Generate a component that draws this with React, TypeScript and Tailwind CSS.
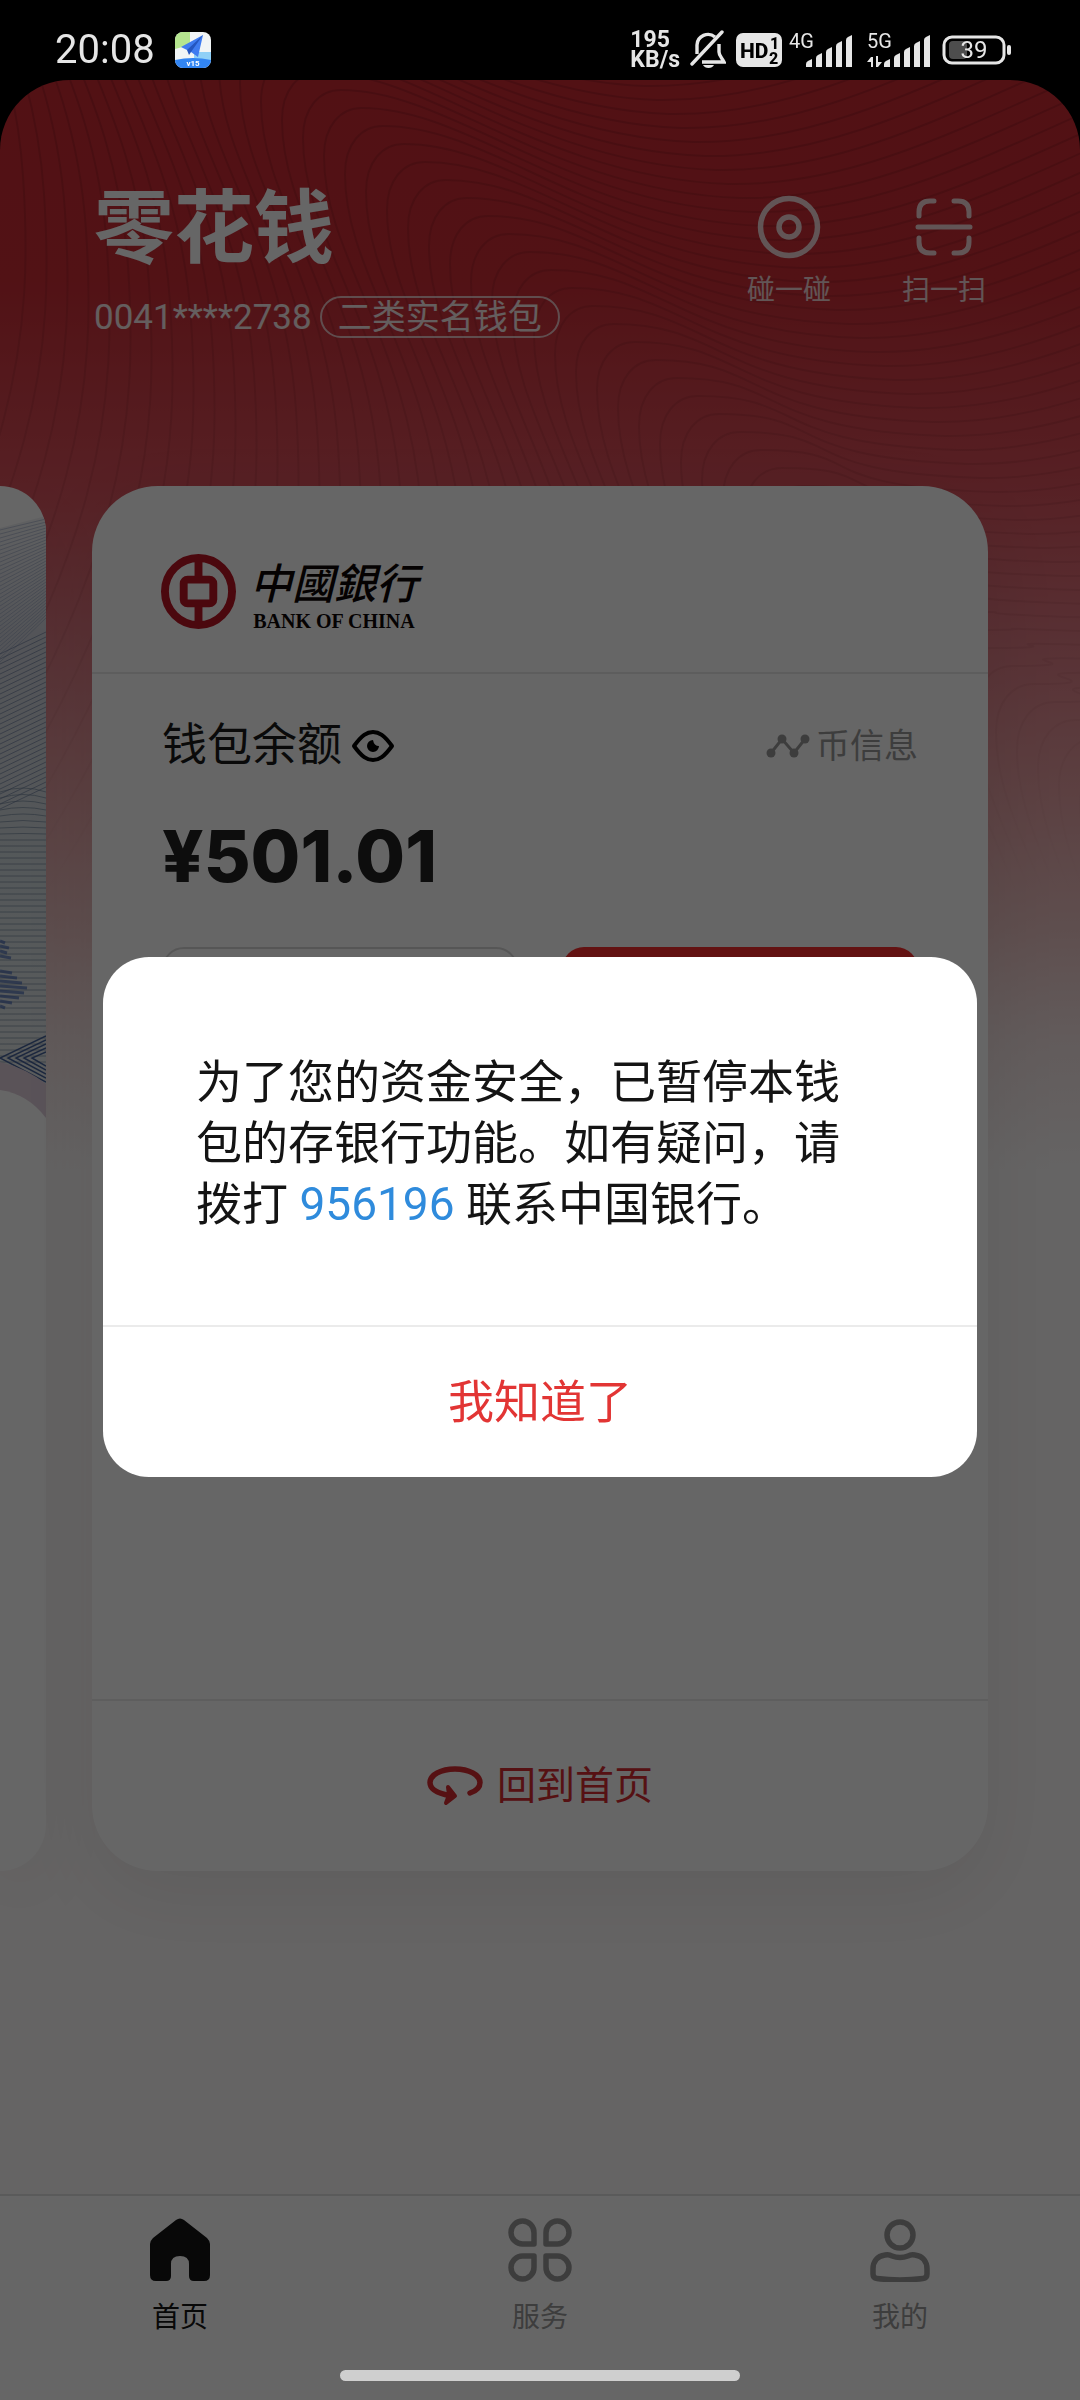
import { useState } from "react"

const waves = Array.from({ length: 62 }, (_, index) => index - 18)

const tabs = [
  { label: "首页", icon: <HomeIcon />, active: true },
  { label: "服务", icon: <ServiceIcon />, active: false },
  { label: "我的", icon: <ProfileIcon />, active: false },
]

function wavePath(i: number) {
  const x = 341 + 21 * i
  const y = 90 + 18 * i
  const vx = 753 + 12 * i
  const vy = 212 + 14 * i
  return [
    `M${x - 130} ${y + 1000}`,
    `C${x + 60} ${y + 720} ${x + 70} ${y + 560} ${x + 60} ${y + 410}`,
    `C${x + 48} ${y + 230} ${x - 38} ${y + 150} ${x - 38} ${y + 48}`,
    `C${x - 38} ${y + 18} ${x - 22} ${y} ${x} ${y}`,
    `C${x + 110} ${y} ${vx - 190} ${vy - 6} ${vx} ${vy}`,
    `C${vx + 130} ${vy + 2} ${vx + 240} ${vy - 60} ${vx + 400} ${vy - 130}`,
  ].join(" ")
}

function Waves() {
  return (
    <svg className="absolute inset-x-0 top-0 h-[1080px] w-full" viewBox="0 80 1080 1080" preserveAspectRatio="xMidYMin slice" fill="none" aria-hidden="true">
      <defs>
        <linearGradient id="wave" gradientUnits="userSpaceOnUse" x1="0" y1="80" x2="0" y2="900">
          <stop offset="0" stopColor="#3d0008" stopOpacity="0.17" />
          <stop offset="0.5" stopColor="#5d1018" stopOpacity="0.12" />
          <stop offset="0.75" stopColor="#5d1018" stopOpacity="0.06" />
          <stop offset="1" stopColor="#5d1018" stopOpacity="0" />
        </linearGradient>
      </defs>
      {waves.map((i) => (
        <path key={i} d={wavePath(i)} stroke="url(#wave)" strokeWidth="2" />
      ))}
    </svg>
  )
}

function NavigationAppIcon() {
  return (
    <svg className="size-9" viewBox="0 0 36 36" aria-hidden="true">
      <defs>
        <clipPath id="app">
          <rect width="36" height="36" rx="8" />
        </clipPath>
      </defs>
      <g clipPath="url(#app)">
        <rect width="36" height="36" fill="#f1f5f6" />
        <path d="M0 0h15v13L0 17z" fill="#b5e58f" />
        <path d="M19 20h17v10H19z" fill="#8fd0f7" />
        <path d="M6 15 28 3l-5 22-7-5z" fill="#3f7cf0" />
        <path d="M28 3 16 20l-2 3-2-5z" fill="#2456c0" />
        <path d="M0 28q18-4 36 0v8H0z" fill="#3285f2" />
      </g>
      <text x="18" y="34" textAnchor="middle" fontSize="8" fontWeight="700" fill="#fff">v15</text>
    </svg>
  )
}

function BellOffIcon() {
  return (
    <svg className="h-10 w-9" viewBox="0 0 36 40" fill="none" stroke="#e6e6e6" strokeWidth="3.4" aria-hidden="true">
      <path d="M7 24V15a11 11 0 0 1 18-8M29 14v8c0 4 3 6 5 10H12" />
      <path d="M2 34 32 2" strokeLinecap="round" />
      <path d="M13 35h11a6 5 0 0 1-11 0z" fill="#e6e6e6" stroke="none" />
    </svg>
  )
}

function HdBadge() {
  return (
    <svg className="h-[34px] w-[46px]" viewBox="0 0 46 34" aria-hidden="true">
      <rect width="46" height="34" rx="7" fill="#e6e6e6" />
      <text x="4" y="25" fontSize="21" fontWeight="800">HD</text>
      <text x="34" y="16" fontSize="16" fontWeight="800">1</text>
      <text x="33" y="31" fontSize="16" fontWeight="800">2</text>
    </svg>
  )
}

function Signal({ label, transfer }: { label: string; transfer?: boolean }) {
  return (
    <svg className="h-11 w-[66px]" viewBox="0 -4 66 44" fill="#e6e6e6" role="img" aria-label={label}>
      <text x="1" y="16" fontSize="20">{label}</text>
      {transfer && (
        <path d="M1 30 5 25H7v10H5v-5zM10 24h2v6h4l-4 5h-2z" />
      )}
      {[0, 1, 2, 3, 4].map((i) => (
        <path key={i} d={`M${18 + i * 10} ${35}v${-3 - i * 6}q0-2 2-3l4-2v${8 + i * 6}z`} />
      ))}
    </svg>
  )
}

function Battery() {
  return (
    <svg className="h-[30px] w-[70px]" viewBox="0 0 70 30" role="img" aria-label="39%">
      <rect x="2" y="2" width="60" height="26" rx="8" fill="none" stroke="#e6e6e6" strokeWidth="3" />
      <rect x="7" y="6" width="18" height="18" rx="4" fill="#4d4d4d" />
      <rect x="65" y="10" width="4" height="10" rx="2" fill="#e6e6e6" />
      <text x="32" y="23" textAnchor="middle" fontSize="24" fill="#e6e6e6">39</text>
    </svg>
  )
}

function StatusBar() {
  return (
    <div className="relative z-30 flex h-20 shrink-0 items-center pr-[68px] pl-[55px] pt-[19px] text-[#e6e6e6]">
      <span className="text-[40px] leading-none">20:08</span>
      <div className="ml-5">
        <NavigationAppIcon />
      </div>
      <div className="ml-auto flex items-center gap-[10px]">
        <div className="text-[23px] leading-[20px] font-bold">
          <div>195</div>
          <div>KB/s</div>
        </div>
        <BellOffIcon />
        <HdBadge />
        <div className="-ml-1 flex gap-3">
          <Signal label="4G" />
          <Signal label="5G" transfer />
        </div>
        <Battery />
      </div>
    </div>
  )
}

function TapIcon() {
  return (
    <svg className="size-16" viewBox="0 0 64 64" fill="none" stroke="currentColor" strokeWidth="5.500" aria-hidden="true">
      <circle cx="32" cy="32" r="28.500" />
      <circle cx="32" cy="32" r="10" />
    </svg>
  )
}

function ScanIcon() {
  return (
    <svg className="size-16" viewBox="0 0 64 64" fill="none" stroke="currentColor" strokeWidth="5" strokeLinecap="round" aria-hidden="true">
      <path d="M7 21v-4Q7 6 18 6h4M42 6h4q11 0 11 11v4M7 43v4q0 11 11 11h4M42 58h4q11 0 11-11v-4M6 32h52" />
    </svg>
  )
}

function EyeIcon() {
  return (
    <svg className="h-[34px] w-11" viewBox="0 0 44 34" fill="none" stroke="#000" strokeWidth="4" strokeLinejoin="round" aria-hidden="true">
      <path d="M3 17C11 6 16 3 22 3s11 3 19 14C33 28 28 31 22 31S11 28 3 17z" />
      <path d="M22 11a6 6 0 1 0 6 6q-5 0-6-6z" fill="#000" stroke="none" />
    </svg>
  )
}

function TrendIcon() {
  return (
    <svg className="h-6 w-11" viewBox="0 0 44 24" fill="currentColor" stroke="currentColor" aria-hidden="true">
      <path d="M5 19 16 5l12 14L39 5" fill="none" strokeWidth="3" />
      <g stroke="none">
        <circle cx="5" cy="19" r="4.500" />
        <circle cx="16" cy="5" r="4.500" />
        <circle cx="28" cy="19" r="4.500" />
        <circle cx="39" cy="5" r="4.500" />
      </g>
    </svg>
  )
}

function FlipIcon() {
  return (
    <svg className="h-10 w-14" viewBox="0 0 56 40" fill="none" stroke="currentColor" strokeWidth="5.500" strokeLinecap="round" strokeLinejoin="round" aria-hidden="true">
      <path d="M43 27C49 25 53 21 53 16.500 53 9 42 3 28 3S3 9 3 16.500c0 7 8 11 20 13" />
      <path d="m21 21 7 9-9 7 3-8z" fill="currentColor" strokeWidth="4" />
    </svg>
  )
}

function HomeIcon() {
  return (
    <svg className="size-16" viewBox="0 0 64 64" fill="currentColor" aria-hidden="true">
      <path d="M28 2q4-3 8 0l23 18q3 3 3 6v31q0 6-6 6H46q-5 0-5-5V46q0-8-9-8t-9 8v12q0 5-5 5H8q-6 0-6-6V26q0-3 3-6z" />
    </svg>
  )
}

function ServiceIcon() {
  return (
    <svg className="size-16" viewBox="0 0 64 64" fill="none" stroke="currentColor" strokeWidth="5.500" strokeLinejoin="round" aria-hidden="true">
      <path d="M26 26H15A11.500 11.500 0 1 1 26 15z" />
      <path d="M38 26h11a11.500 11.500 0 1 0-11-11z" />
      <path d="M26 38H15a11.500 11.500 0 1 0 11 11z" />
      <path d="M38 38h11a11.500 11.500 0 1 1-11 11z" />
    </svg>
  )
}

function ProfileIcon() {
  return (
    <svg className="size-16" viewBox="0 0 64 64" fill="none" stroke="currentColor" strokeWidth="5.500" strokeLinejoin="round" aria-hidden="true">
      <circle cx="32" cy="17" r="13" />
      <path d="M17 37q4-1 7 1 8 3 16 0 3-2 7-1c8 1 12 7 12 14v5q0 4-4 4.500-23 3-46 0-4-.5-4-4.500v-5c0-7 4-13 12-14z" />
    </svg>
  )
}

function BankLogo() {
  return (
    <div className="flex items-center gap-[14px]">
      <svg className="size-[75px]" viewBox="0 0 76 76" fill="none" stroke="#bb1424" aria-hidden="true">
        <circle cx="38" cy="38" r="34" strokeWidth="8" />
        <rect x="23" y="26" width="30" height="24" rx="4" strokeWidth="8" />
        <path d="M38 4v20M38 52v20" strokeWidth="8" />
      </svg>
      <div className="flex flex-col items-center text-[#0d0606]">
        <span className="font-['Noto_Sans_CJK_TC',sans-serif] text-[42px] leading-[60px] font-medium italic">中國銀行</span>
        <span className="font-['Liberation_Serif',serif] text-[20px] leading-[20px] font-bold">BANK OF CHINA</span>
      </div>
    </div>
  )
}

function PreviousCard() {
  return (
    <div className="w-[46px] shrink-0 overflow-hidden rounded-tr-[66px] rounded-br-[66px] bg-white shadow-[0_24px_70px_rgba(0,0,0,0.06)]">
      <svg className="h-[640px] w-[46px]" viewBox="0 0 46 640" fill="none" aria-hidden="true">
        <defs>
          <linearGradient id="note" x1="0" y1="0" x2="0" y2="1">
            <stop offset="0" stopColor="#f0f1f4" />
            <stop offset="0.2" stopColor="#cfd2db" />
            <stop offset="0.6" stopColor="#d3dce0" />
            <stop offset="1" stopColor="#e6e9ea" />
          </linearGradient>
        </defs>
        <path d="M0 42 46 30V640H0z" fill="url(#note)" />
        {Array.from({ length: 34 }, (_, i) => (
          <path key={i} d={`M0 ${44 + i * 4}L46 ${33 + i * 3}`} stroke="#8d9bbb" strokeOpacity="0.5" />
        ))}
        {Array.from({ length: 32 }, (_, i) => (
          <path key={i} d={`M0 ${168 + i * 5}L46 ${146 + i * 5}`} stroke="#5a6b92" strokeOpacity="0.55" />
        ))}
        {Array.from({ length: 46 }, (_, i) => (
          <path key={i} d={`M0 ${306 + i * 6}q23 -${Math.max(0, 8 - i)} 46 0`} stroke="#6b7f96" strokeOpacity="0.6" />
        ))}
        {[455, 460, 465, 470, 485, 490, 495, 500, 505, 510, 515, 520].map((y, i) => (
          <path key={y} d={`M0 ${y}l${[5, 9, 7, 11, 12, 17, 22, 27, 24, 19, 12, 5][i]} 2`} stroke="#4a6cb5" strokeWidth="3" strokeOpacity="0.7" />
        ))}
        {[0, 8, 16, 24, 32].map((i) => (
          <path key={i} d={`M46 ${550 + i / 2}L${i} 572L46 ${596 - i / 2}`} stroke="#46629b" strokeWidth="1.500" />
        ))}
        <path d="M0 576q26 6 46 22v42H0z" fill="#e0cfdc" />
        <path d="M0 604q28 4 46 28v8H0z" fill="#fff" />
      </svg>
    </div>
  )
}

function WalletCard() {
  return (
    <section className="mr-[92px] ml-[46px] flex min-w-0 flex-1 flex-col rounded-[66px] bg-white shadow-[0_24px_80px_rgba(0,0,0,0.07)]">
      <div className="flex h-[188px] items-center border-b-2 border-[#e8e8e8] px-[69px] pt-6">
        <BankLogo />
      </div>
      <div className="flex-1 px-[70px] pt-10">
        <div className="flex items-center justify-between">
          <div className="flex items-center gap-[9px]">
            <h2 className="text-[45px] leading-[64px] text-[#1a1a1a]">钱包余额</h2>
            <button aria-label="显示余额">
              <EyeIcon />
            </button>
          </div>
          <a href="#info" className="flex items-center gap-[6px] text-[34px] leading-[64px] text-[#9a9a9a]">
            <TrendIcon />
            币信息
          </a>
        </div>
        <div className="mt-9 font-[Inter,sans-serif] text-[72px] leading-[84px] font-extrabold text-[#222]">¥501.01</div>
        <div className="mt-[49px] grid grid-cols-2 gap-11">
          <div className="h-[100px] rounded-[22px] border-2 border-[#d8d8d8]" />
          <div className="h-[100px] rounded-[22px] bg-[#f72f2d]" />
        </div>
      </div>
      <a href="#home" className="flex h-[172px] items-center justify-center gap-[14px] border-t-2 border-[#ececec] text-[39px] text-[#d62b31]">
        <FlipIcon />
        回到首页
      </a>
    </section>
  )
}

function Header() {
  return (
    <header className="flex h-[406px] shrink-0 justify-between px-[94px] pt-[105px] text-white">
      <div>
        <h1 className="text-[80px] leading-[88px] font-bold">零花钱</h1>
        <div className="mt-[23px] flex items-center gap-2 text-white/90">
          <span className="text-[35px] leading-none">0041****2738</span>
          <span className="rounded-full border-2 border-white/70 px-4 text-[34px] leading-[38px]">二类实名钱包</span>
        </div>
      </div>
      <div className="flex items-start gap-[71px] pt-[10px] text-[28px] leading-[40px] text-white/80">
        <button className="flex flex-col items-center gap-3">
          <TapIcon />
          碰一碰
        </button>
        <button className="flex flex-col items-center gap-3">
          <ScanIcon />
          扫一扫
        </button>
      </div>
    </header>
  )
}

function TabBar() {
  return (
    <nav className="flex h-[206px] shrink-0 items-start justify-around border-t-2 border-[#e0e0e0] bg-white pt-[22px]">
      {tabs.map((tab) => (
        <a
          key={tab.label}
          href="#tab"
          className={`flex flex-1 flex-col items-center gap-4 text-[28px] leading-[40px] ${tab.active ? "text-[#141414]" : "text-[#999]"}`}
        >
          {tab.icon}
          {tab.label}
        </a>
      ))}
    </nav>
  )
}

function NoticeDialog({ onClose }: { onClose: () => void }) {
  return (
    <div className="fixed inset-0 z-20 flex items-center bg-black/60 px-[103px] pt-[34px]">
      <div role="dialog" aria-modal="true" className="w-full overflow-hidden rounded-[46px] bg-white">
        <p className="pt-[95px] pr-[94px] pb-[90px] pl-[93px] text-[46px] leading-[61px] text-[#141414]">
          为了您的资金安全，已暂停本钱包的存银行功能。如有疑问，请拨打{" "}
          <a href="tel:956196" className="text-[#2f8bdc]">956196</a>{" "}
          联系中国银行。
        </p>
        <button onClick={onClose} className="h-[152px] w-full border-t-2 border-[#ebebeb] text-[46px] text-[#e23534]">
          我知道了
        </button>
      </div>
    </div>
  )
}

export default function App() {
  const [open, setOpen] = useState(true)

  return (
    <div lang="zh-CN" className="flex min-h-screen flex-col bg-black font-[Roboto,'Noto_Sans_CJK_SC',sans-serif]">
      <StatusBar />
      <div className="relative flex flex-1 flex-col overflow-hidden rounded-t-[70px] bg-white bg-[linear-gradient(to_bottom,#cd2b34_0px,#cc2d36_200px,#d8505a_400px,#dd7a83_560px,#e5a0a3_710px,#ecc4c4_850px,#f5e4e4_960px,#fdfafa_1090px)]">
        <Waves />
        <div className="relative flex flex-1 flex-col">
          <Header />
          <main className="flex flex-1 pb-[323px]">
            <PreviousCard />
            <WalletCard />
          </main>
          <TabBar />
        </div>
      </div>
      {open && <NoticeDialog onClose={() => setOpen(false)} />}
      <div className="fixed inset-x-0 bottom-[19px] z-30 mx-auto h-[11px] w-[400px] rounded-full bg-[#cfcfcf]" />
    </div>
  )
}
